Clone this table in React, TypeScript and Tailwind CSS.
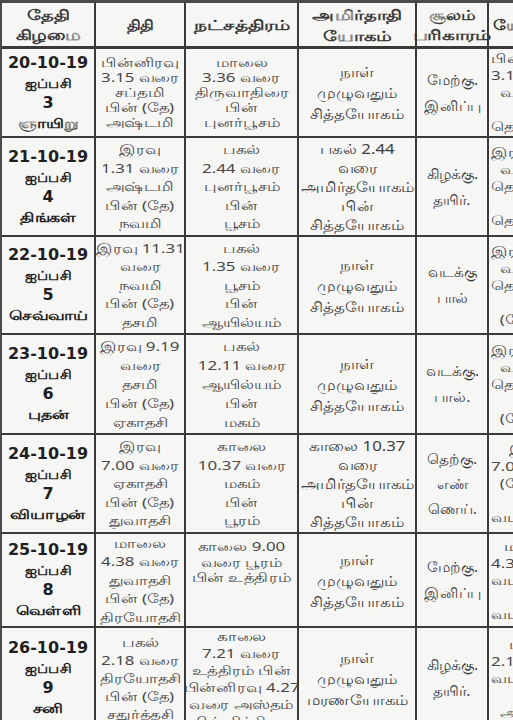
import React from "react";

type Row = {
  h: string;
  date: string[];
  tithi: string[];
  tithiLead: string;
  nak: string[];
  nakLead: string;
  nakPos: string;
  yog: string[];
  yogLead: string;
  sool: string[];
  soolLead: string;
  last: string[];
};

const rows: Row[] = [
  {
    h: "h-[87px]",
    date: ["20-10-19", "ஐப்பசி", "3", "ஞாயிறு"],
    tithi: ["பின்னிரவு", "3.15 வரை", "சப்தமி", "பின் (தே)", "அஷ்டமி"],
    tithiLead: "leading-[15px]",
    nak: ["மாலை", "3.36 வரை", "திருவாதிரை", "பின்", "புனர்பூசம்"],
    nakLead: "leading-[15px]",
    nakPos: "justify-center",
    yog: ["நாள்", "முழுவதும்", "சித்தயோகம்"],
    yogLead: "leading-[21px]",
    sool: ["மேற்கு.", "இனிப்பு"],
    soolLead: "leading-[26px]",
    last: ["பின்னிரவு", "3.15 வரை", "  வரை", "", "தெற்கு"],
  },
  {
    h: "h-[97px]",
    date: ["21-10-19", "ஐப்பசி", "4", "திங்கள்"],
    tithi: ["இரவு", "1.31 வரை", "அஷ்டமி", "பின் (தே)", "நவமி"],
    tithiLead: "leading-[18.5px]",
    nak: ["பகல்", "2.44 வரை", "புனர்பூசம்", "பின்", "பூசம்"],
    nakLead: "leading-[18.5px]",
    nakPos: "justify-center",
    yog: ["பகல் 2.44", "வரை", "அமிர்தயோகம்", "பின்", "சித்தயோகம்"],
    yogLead: "leading-[19px]",
    sool: ["கிழக்கு.", "தயிர்."],
    soolLead: "leading-[26px]",
    last: ["இரவு", "  வரை", "தெற்கு", "", "தெய்வம்"],
  },
  {
    h: "h-[96px]",
    date: ["22-10-19", "ஐப்பசி", "5", "செவ்வாய்"],
    tithi: ["இரவு 11.31", "வரை", "நவமி", "பின் (தே)", "தசமி"],
    tithiLead: "leading-[18.5px]",
    nak: ["பகல்", "1.35 வரை", "பூசம்", "பின்", "ஆயில்யம்"],
    nakLead: "leading-[18.5px]",
    nakPos: "justify-center",
    yog: ["நாள்", "முழுவதும்", "சித்தயோகம்"],
    yogLead: "leading-[21px]",
    sool: ["வடக்கு", "பால்"],
    soolLead: "leading-[26px]",
    last: ["இரவு", "  வரை", "தெற்கு", "", "  (தே)"],
  },
  {
    h: "h-[98px]",
    date: ["23-10-19", "ஐப்பசி", "6", "புதன்"],
    tithi: ["இரவு 9.19", "வரை", "தசமி", "பின் (தே)", "ஏகாதசி"],
    tithiLead: "leading-[19px]",
    nak: ["பகல்", "12.11 வரை", "ஆயில்யம்", "பின்", "மகம்"],
    nakLead: "leading-[19px]",
    nakPos: "justify-center",
    yog: ["நாள்", "முழுவதும்", "சித்தயோகம்"],
    yogLead: "leading-[21px]",
    sool: ["வடக்கு.", "பால்."],
    soolLead: "leading-[26px]",
    last: ["இரவு", "  வரை", "தெற்கு", "", "  (தே)"],
  },
  {
    h: "h-[97px]",
    date: ["24-10-19", "ஐப்பசி", "7", "வியாழன்"],
    tithi: ["இரவு", "7.00 வரை", "ஏகாதசி", "பின் (தே)", "துவாதசி"],
    tithiLead: "leading-[18.5px]",
    nak: ["காலை", "10.37 வரை", "மகம்", "பின்", "பூரம்"],
    nakLead: "leading-[18.5px]",
    nakPos: "justify-center",
    yog: ["காலை 10.37", "வரை", "அமிர்தயோகம்", "பின்", "சித்தயோகம்"],
    yogLead: "leading-[19px]",
    sool: ["தெற்கு.", "எண்", "ணெய்."],
    soolLead: "leading-[25px]",
    last: ["    இ", "7.00 வரை", "  (தே)", "", "வடக்கு"],
  },
  {
    h: "h-[92px]",
    date: ["25-10-19", "ஐப்பசி", "8", "வெள்ளி"],
    tithi: ["மாலை", "4.38 வரை", "துவாதசி", "பின் (தே)", "திரயோதசி"],
    tithiLead: "leading-[18.5px]",
    nak: ["காலை 9.00", "வரை பூரம்", "பின் உத்திரம்"],
    nakLead: "leading-[15.5px]",
    nakPos: "justify-start pt-[5px]",
    yog: ["நாள்", "முழுவதும்", "சித்தயோகம்"],
    yogLead: "leading-[21px]",
    sool: ["மேற்கு.", "இனிப்பு"],
    soolLead: "leading-[26px]",
    last: ["   மாலை", "4.38 வரை", "வடக்கு", "", "வடக்கு"],
  },
  {
    h: "h-[100px]",
    date: ["26-10-19", "ஐப்பசி", "9", "சனி"],
    tithi: ["பகல்", "2.18 வரை", "திரயோதசி", "பின் (தே)", "சதுர்த்தசி"],
    tithiLead: "leading-[18px]",
    nak: ["காலை", "7.21 வரை", "உத்திரம் பின்", "பின்னிரவு 4.27", "வரை அஸ்தம்", "பின் சித்திரை"],
    nakLead: "leading-[17px]",
    nakPos: "justify-start",
    yog: ["நாள்", "முழுவதும்", "மரணயோகம்"],
    yogLead: "leading-[21px]",
    sool: ["கிழக்கு.", "தயிர்."],
    soolLead: "leading-[26px]",
    last: ["    ப", "2.18 வரை", "வடக்கு", "", "  அமிர்த"],
  },
];

function Lines({ lines, cls }: { lines: string[]; cls: string }) {
  return (
    <>
      {lines.map((l, i) => (
        <div key={i} className={`whitespace-pre ${cls}`}>
          {l === "" ? "\u00a0" : l}
        </div>
      ))}
    </>
  );
}

const cell = "bg-[#f6f6f4] flex flex-col overflow-hidden";
const head =
  "h-[44px] bg-[#f6f6f4] border-b border-[#3a3a3a] flex flex-col items-center justify-center text-[14px] font-bold text-[#3a3a3a]";

export default function App() {
  return (
    <div className="w-[513px] h-[720px] overflow-hidden bg-[#f6f6f4] font-['Noto_Sans','Liberation_Sans',sans-serif]">
      <div className="w-[620px] border-t-[3px] border-l-2 border-[#4a4a4a] bg-[#3a3a3a] grid grid-cols-[92px_88px_111px_116px_70px_130px] gap-[2px]">
        {/* header */}
        <div className={`${head} leading-[20px]`}>
          <div className="scale-x-[1.4]">தேதி</div>
          <div className="scale-x-[1.4]">கிழமை</div>
        </div>
        <div className={head}>
          <div className="scale-x-[1.2]">திதி</div>
        </div>
        <div className={head}>
          <div className="scale-x-[1.45] whitespace-nowrap">நட்சத்திரம்</div>
        </div>
        <div className={`${head} leading-[21px]`}>
          <div className="scale-x-[1.4]">அமிர்தாதி</div>
          <div className="scale-x-[1.4]">யோகம்</div>
        </div>
        <div className={`${head} leading-[20px]`}>
          <div className="scale-x-[1.3]">சூலம்</div>
          <div className="scale-x-[1.45] whitespace-nowrap">பரிகாரம்</div>
        </div>
        <div className={`${head} !items-start pl-[4px]`}>
          <div className="scale-x-[1.3] origin-left">யோகம்</div>
        </div>

        {rows.map((r, i) => (
          <React.Fragment key={i}>
            <div className={`${cell} ${r.h} items-center justify-center text-[#1f1f1f] font-bold`}>
              <div className="text-[16px] leading-[20px] font-['DejaVu_Sans',sans-serif]">{r.date[0]}</div>
              <div className="text-[13px] leading-[20px] scale-x-[1.15]">{r.date[1]}</div>
              <div className="text-[16px] leading-[20px] font-['DejaVu_Sans',sans-serif]">{r.date[2]}</div>
              <div className="text-[13px] leading-[20px] scale-x-[1.35] whitespace-nowrap">{r.date[3]}</div>
            </div>
            <div className={`${cell} ${r.h} items-center justify-center text-[13px] text-[#484848]`}>
              <Lines lines={r.tithi} cls={`${r.tithiLead} scale-x-[1.3]`} />
            </div>
            <div className={`${cell} ${r.h} items-center ${r.nakPos} text-[13px] text-[#484848]`}>
              <Lines lines={r.nak} cls={`${r.nakLead} scale-x-[1.3]`} />
            </div>
            <div className={`${cell} ${r.h} items-center justify-center text-[14px] text-[#3f3f3f]`}>
              <Lines lines={r.yog} cls={`${r.yogLead} scale-x-[1.2]`} />
            </div>
            <div className={`${cell} ${r.h} items-center justify-center text-[14px] text-[#3f3f3f]`}>
              <Lines lines={r.sool} cls={`${r.soolLead} scale-x-[1.1]`} />
            </div>
            <div className={`${cell} ${r.h} items-start justify-center pl-[2px] text-[13px] text-[#484848]`}>
              <Lines lines={r.last} cls="leading-[17px] scale-x-[1.3] origin-left" />
            </div>
          </React.Fragment>
        ))}
      </div>
    </div>
  );
}
